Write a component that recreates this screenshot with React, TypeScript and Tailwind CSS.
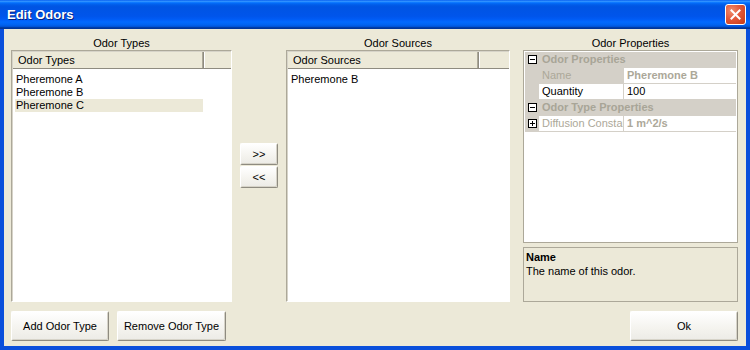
import React from "react";

const btn =
  "flex items-center justify-center bg-[linear-gradient(to_bottom,#FFFFFF_0%,#F4F3EE_60%,#ECEBE6_100%)] border border-t-[#FFFFFF] border-l-[#FFFFFF] border-b-[#8E8B80] border-r-[#8E8B80] shadow-[inset_-1px_-1px_0_#D6D3C8] rounded-[2px] text-[11px] text-black";

const ListPanel = ({ title, items, selected }: { title: string; items: string[]; selected?: string }) => (
  <div className="flex-1 flex flex-col bg-white border border-t-[#ACA899] border-l-[#ACA899] border-b-[#FFFFFF] border-r-[#FFFFFF] shadow-[inset_1px_1px_0_#D6D3C8]">
    <div className="flex h-[17px] ml-[1px] mt-[1px] bg-[#ECE9D8] border-b border-[#8E8B80]">
      <div className="w-[191px] pl-[5px] leading-[16px] border-r border-[#8E8B80] shadow-[inset_-1px_0_0_#ACA899]">
        {title}
      </div>
      <div className="flex-1 border-l border-white" />
    </div>
    <div className="pt-[4px] pl-[3px]">
      {items.map((it) => (
        <div
          key={it}
          className={`w-[188px] h-[13px] leading-[13px] pl-[1px] ${it === selected ? "bg-[#ECE9D8]" : ""}`}
        >
          {it}
        </div>
      ))}
    </div>
  </div>
);

const Box = ({ plus }: { plus?: boolean }) => (
  <svg width="9" height="9" viewBox="0 0 9 9" className="block">
    <rect x="0.5" y="0.5" width="8" height="8" fill="#FFFFFF" stroke="#000000" />
    <line x1="2" y1="4.5" x2="7" y2="4.5" stroke="#000000" />
    {plus && <line x1="4.5" y1="2" x2="4.5" y2="7" stroke="#000000" />}
  </svg>
);

const Category = ({ label }: { label: string }) => (
  <div className="flex h-[16px] items-center bg-[#D4D0C8] border-b border-[#D4D0C8]">
    <div className="w-[15px] flex justify-center">
      <Box />
    </div>
    <div className="pl-[2px] font-bold text-[#A8A597]">{label}</div>
  </div>
);

const Prop = ({
  label,
  value,
  labelBg,
  dim,
  expand,
}: {
  label: string;
  value: string;
  labelBg?: boolean;
  dim?: boolean;
  expand?: boolean;
}) => (
  <div className="flex h-[16px] border-b border-[#D4D0C8]">
    <div className="w-[14px] bg-[#D4D0C8] flex items-center justify-center">{expand && <Box plus />}</div>
    <div
      className={`w-[85px] pl-[3px] leading-[15px] overflow-hidden whitespace-nowrap border-r border-[#D4D0C8] ${
        labelBg ? "bg-[#D4D0C8]" : "bg-white"
      } ${dim ? "text-[#ACA899]" : "text-black"}`}
    >
      {label}
    </div>
    <div className={`flex-1 pl-[3px] leading-[15px] bg-white ${dim ? "text-[#ACA899] font-bold" : "text-black"}`}>
      {value}
    </div>
  </div>
);

export default function App() {
  return (
    <div className="w-[750px] h-[350px] flex flex-col bg-[#0A4FDB] font-['Liberation_Sans',sans-serif] text-[11px] text-black">
      <div className="h-[29px] flex items-center justify-between pl-[7px] pr-[4px] bg-[linear-gradient(to_bottom,#0058EE_0%,#3593FF_4%,#288EFF_6%,#127DFF_8%,#036FFC_10%,#0262EE_14%,#0057E5_20%,#0054E3_24%,#0055EB_56%,#005BF5_66%,#026AFE_76%,#0062EF_86%,#0052D6_92%,#0040AB_94%,#003092_100%)]">
        <span className="text-white font-bold text-[13px] [text-shadow:1px_1px_0_#0A1F7A]">Edit Odors</span>
        <div className="w-[21px] h-[21px] rounded-[3px] border border-white flex items-center justify-center bg-[radial-gradient(circle_at_30%_30%,#F08E6E_0%,#E2583A_45%,#C53A14_100%)]">
          <svg width="11" height="11" viewBox="0 0 11 11">
            <path d="M1.5 1.5 L9.5 9.5 M9.5 1.5 L1.5 9.5" stroke="#FFFFFF" strokeWidth="2" strokeLinecap="square" />
          </svg>
        </div>
      </div>
      <div className="flex-1 mx-[4px] mb-[4px] bg-[#ECE9D8] flex flex-col pl-[7px] pr-[8px] pt-[8px] pb-[5px]">
        <div className="flex h-[265px]">
          <div className="w-[221px] flex flex-col">
            <div className="h-[13px] leading-[13px] text-center">Odor Types</div>
            <ListPanel title="Odor Types" items={["Pheremone A", "Pheremone B", "Pheremone C"]} selected="Pheremone C" />
          </div>
          <div className="w-[38px] ml-[8px] pt-[106px] flex flex-col gap-[1px]">
            <div className={`${btn} h-[22px]`}>&gt;&gt;</div>
            <div className={`${btn} h-[22px]`}>&lt;&lt;</div>
          </div>
          <div className="w-[224px] ml-[8px] flex flex-col">
            <div className="h-[13px] leading-[13px] text-center">Odor Sources</div>
            <ListPanel title="Odor Sources" items={["Pheremone B"]} />
          </div>
          <div className="w-[215px] ml-[13px] flex flex-col">
            <div className="h-[13px] leading-[13px] text-center">Odor Properties</div>
            <div className="h-[193px] bg-white border border-[#ACA899] p-[1px] flex flex-col">
              <Category label="Odor Properties" />
              <Prop label="Name" value="Pheremone B" labelBg dim />
              <Prop label="Quantity" value="100" />
              <Category label="Odor Type Properties" />
              <Prop label="Diffusion Constant" value="1 m^2/s" dim expand />
            </div>
            <div className="mt-[4px] flex-1 border border-[#ACA899] bg-[#ECE9D8] px-[2px] pt-[2px]">
              <div className="font-bold leading-[14px]">Name</div>
              <div className="leading-[14px]">The name of this odor.</div>
            </div>
          </div>
        </div>
        <div className="flex mt-[9px] h-[30px]">
          <div className={`${btn} w-[98px]`}>Add Odor Type</div>
          <div className={`${btn} w-[109px] ml-[8px]`}>Remove Odor Type</div>
          <div className={`${btn} w-[108px] ml-auto`}>Ok</div>
        </div>
      </div>
    </div>
  );
}
